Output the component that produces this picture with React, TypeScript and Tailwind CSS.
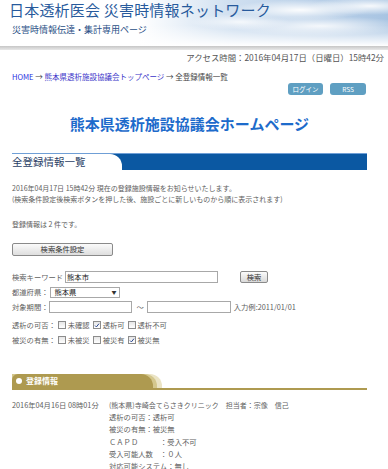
import React from "react";

function Box({ checked }: { checked?: boolean }) {
  return (
    <span className="inline-flex w-[8px] h-[8px] border border-[#8c8c8c] bg-[linear-gradient(#e6e6e6,#ffffff)] items-center justify-center shrink-0">
      {checked && (
        <svg viewBox="0 0 8 8" className="w-[7px] h-[7px]">
          <path d="M1.4 4.1 L3.2 5.9 L6.6 1.6" stroke="#23408a" strokeWidth="1.3" fill="none" />
        </svg>
      )}
    </span>
  );
}

function Check({ label, checked }: { label: string; checked?: boolean }) {
  return (
    <span className="inline-flex items-center gap-[2px] mr-[3px]">
      <Box checked={checked} />
      <span>{label}</span>
    </span>
  );
}

export default function App() {
  return (
    <div className="w-[388px] h-[469px] overflow-hidden bg-white text-[#606060] font-['Noto_Sans_CJK_JP','Noto_Sans',sans-serif] text-[7.3px]">
      {/* header */}
      <div className="h-[46px] pl-[9px] pt-[1px] bg-[linear-gradient(to_bottom,rgba(255,255,255,0)_55%,#ffffff_100%),radial-gradient(ellipse_70px_10px_at_300px_10px,rgba(255,255,255,0.95),rgba(255,255,255,0)),radial-gradient(ellipse_60px_9px_at_370px_6px,rgba(255,255,255,0.9),rgba(255,255,255,0)),radial-gradient(ellipse_90px_10px_at_320px_26px,rgba(255,255,255,0.85),rgba(255,255,255,0)),radial-gradient(ellipse_50px_8px_at_240px_22px,rgba(255,255,255,0.8),rgba(255,255,255,0)),linear-gradient(to_right,#ffffff_0%,#ffffff_36%,#cfdff0_60%,#a8c4e2_100%)]">
        <div className="text-[15px] leading-[18px] text-[#275a9c] tracking-[0.2px]">
          日本透析医会 災害時情報ネットワーク
        </div>
        <div className="mt-[5px] pl-[3px] text-[9px] leading-[12px] text-[#2a4f86]">
          災害時情報伝達・集計専用ページ
        </div>
      </div>
      <div className="h-[4px] bg-[linear-gradient(to_bottom,#c6c6c6,#e8e8e8)]" />
      <div className="h-[14px] leading-[14px] text-right pr-[4px] text-[8.4px] text-[#555]">
        アクセス時間：2016年04月17日（日曜日）15時42分
      </div>

      {/* breadcrumb */}
      <div className="mt-[7px] h-[12px] leading-[12px] pl-[12px] text-[7.5px] text-[#444]">
        <span className="text-[#1f2de0]">HOME</span> → <span className="text-[#3b35c9]">熊本県透析施設協議会トップページ</span> → 全登録情報一覧
      </div>
      <div className="flex justify-end gap-[7px] pr-[22px] h-[12px]">
        <span className="w-[35px] h-[12px] rounded-[3px] bg-[#5f9fc2] text-white text-[6.5px] leading-[12px] text-center">ログイン</span>
        <span className="w-[36px] h-[12px] rounded-[3px] bg-[#5f9fc2] text-white text-[6.5px] leading-[12px] text-center">RSS</span>
      </div>

      {/* title */}
      <div className="mt-[21px] h-[15px] leading-[15px] text-center text-[15px] font-bold text-[#1d6bcb] pr-[9px]">
        熊本県透析施設協議会ホームページ
      </div>

      {/* section header */}
      <div className="mt-[22px] ml-[12px] mr-[21px] border-t-[1.5px] border-[#6f9fd6]">
        <div className="flex h-[16px] bg-[#0b58a2]">
          <div className="w-[110px] bg-white rounded-tr-[12px] text-[10.5px] leading-[16px] text-[#2b3f66]">
            全登録情報一覧
          </div>
        </div>
      </div>

      {/* intro text */}
      <div className="mt-[13px] pl-[12px] leading-[11px] text-[7px]">
        <div>2016年04月17日 15時42分 現在の登録施設情報をお知らせいたします。</div>
        <div>(検索条件設定後検索ボタンを押した後、施設ごとに新しいものから順に表示されます)</div>
      </div>
      <div className="mt-[14px] pl-[12px] leading-[11px] text-[7px]">登録情報は 2 件です。</div>

      <div className="mt-[13px] pl-[12px]">
        <div className="w-[101px] h-[13px] border border-[#8a8a8a] rounded-[2px] bg-[linear-gradient(to_bottom,#fbfbfb,#dedede)] text-center leading-[11px] text-[#333]">
          検索条件設定
        </div>
      </div>

      {/* search form */}
      <div className="mt-[14px] pl-[12px]">
        <div className="flex items-center h-[14px]">
          <span>検索キーワード</span>
          <span className="ml-[2px] w-[153px] h-[12px] border border-[#a8a8a8] bg-white text-[#111] leading-[10px] pl-[1px]">熊本市</span>
          <span className="ml-[22px] w-[28px] h-[12px] border border-[#8a8a8a] rounded-[2px] bg-[linear-gradient(to_bottom,#fbfbfb,#d9d9d9)] text-center leading-[10px] text-[#333]">検索</span>
        </div>
        <div className="flex items-center h-[16px]">
          <span>都道府県：</span>
          <span className="ml-[2px] w-[70px] h-[11px] border border-[#a8a8a8] bg-white text-[#111] flex items-center justify-between pl-[3px] pr-[3px]">
            <span className="leading-[9px]">熊本県</span>
            <span className="text-[5px] text-[#333]">▼</span>
          </span>
        </div>
        <div className="flex items-center h-[14px]">
          <span>対象期間：</span>
          <span className="ml-[1px] w-[83px] h-[12px] border border-[#a8a8a8] bg-white" />
          <span className="ml-[4px] mr-[3px]">～</span>
          <span className="w-[84px] h-[12px] border border-[#a8a8a8] bg-white" />
          <span className="ml-[3px]">入力例:2011/01/01</span>
        </div>
        <div className="flex items-center h-[16px] mt-[3px]">
          <span className="mr-[2px]">透析の可否：</span>
          <Check label="未確認" />
          <Check label="透析可" checked />
          <Check label="透析不可" />
        </div>
        <div className="flex items-center h-[14px]">
          <span className="mr-[2px]">被災の有無：</span>
          <Check label="未被災" />
          <Check label="被災有" />
          <Check label="被災無" checked />
        </div>
      </div>

      {/* registered info header */}
      <div className="mt-[27px] ml-[12px] mr-[21px]">
        <div className="flex">
          <div className="bg-[#ebe4c5] rounded-tr-[12px] pr-[5px]">
            <div className="bg-[#d4c78d] rounded-tr-[12px] pr-[4px]">
              <div className="w-[141px] h-[14px] bg-[#ae9a50] rounded-tl-[6px] rounded-tr-[12px] flex items-center pl-[4px] gap-[4px]">
                <span className="w-[6px] h-[6px] rounded-full bg-white" />
                <span className="text-white font-bold text-[8px] leading-[14px]">登録情報</span>
              </div>
            </div>
          </div>
        </div>
        <div className="h-[2px] bg-[#ae9a50]" />
      </div>

      {/* entries */}
      <div className="mt-[9px] pl-[12px] flex leading-[12.2px]">
        <div className="w-[97px] shrink-0 text-[7.3px]">2016年04月16日 08時01分</div>
        <div className="flex flex-col">
          <div className="text-[7px]">(熊本県)寺崎会てらさきクリニック　担当者：宗像　信己</div>
          <div>透析の可否：透析可</div>
          <div>被災の有無：被災無</div>
          <div>ＣＡＰＤ　　　：受入不可</div>
          <div>受入可能人数　：０人</div>
          <div>対応可能システム：無し</div>
        </div>
      </div>
    </div>
  );
}
